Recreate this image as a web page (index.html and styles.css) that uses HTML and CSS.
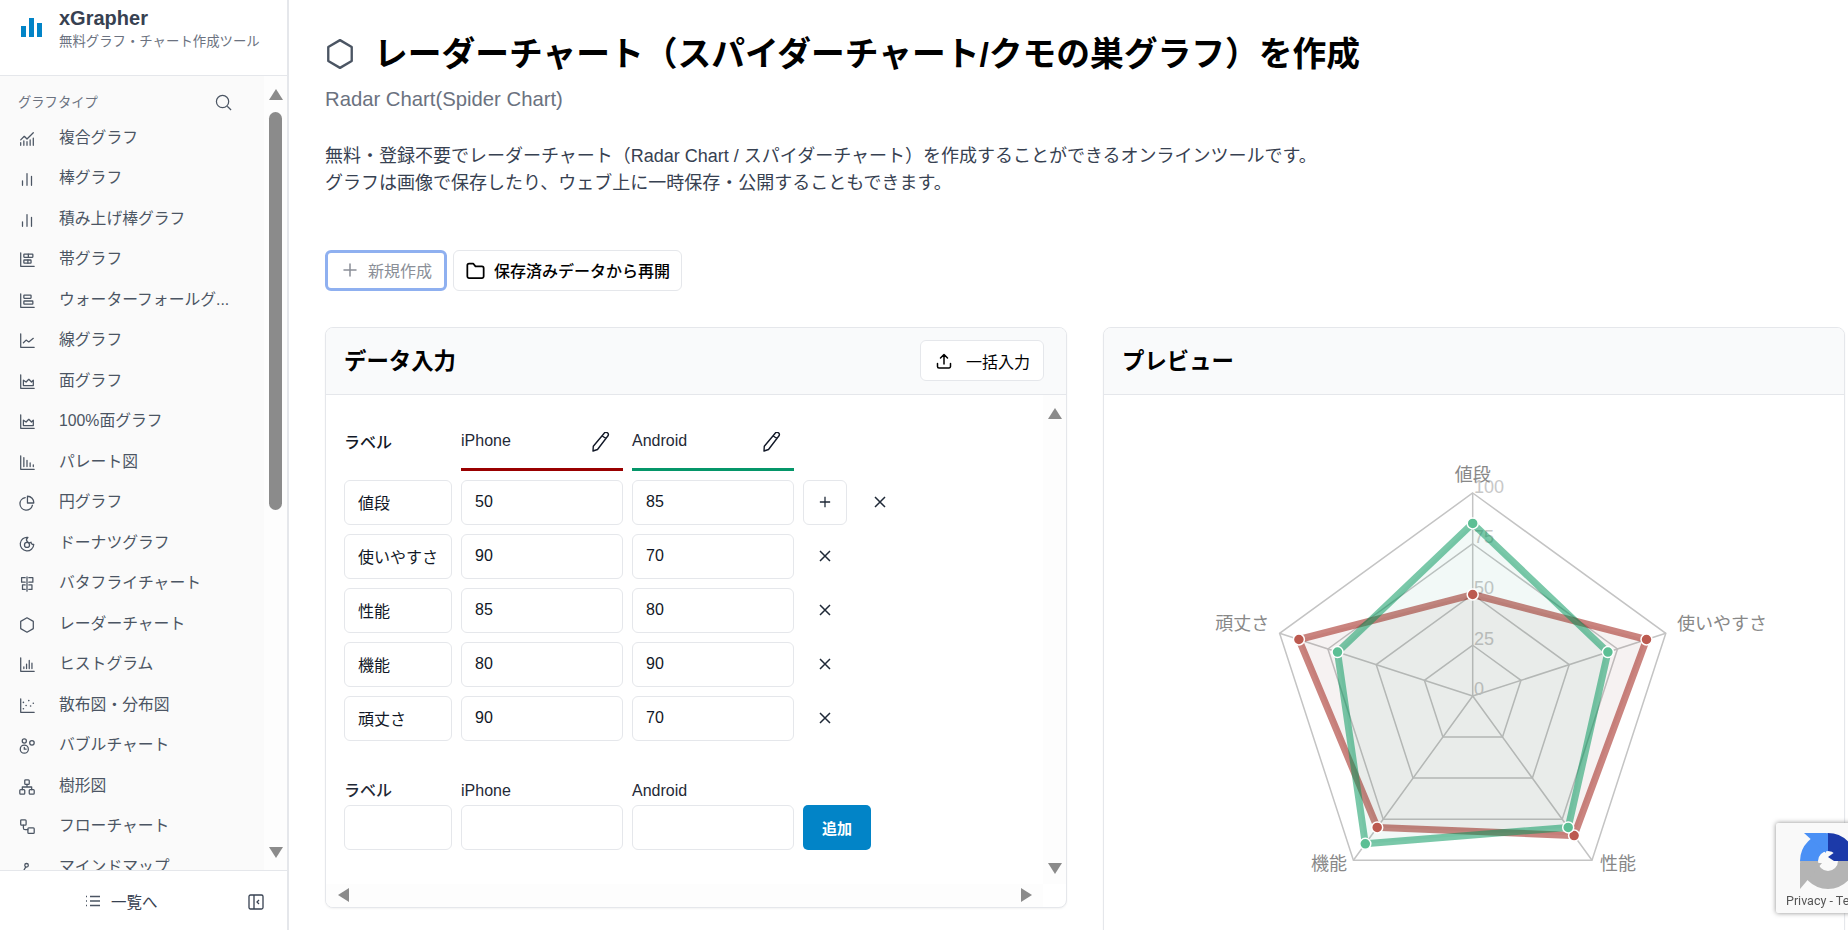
FILE: index.html
```html
<!DOCTYPE html>
<html lang="ja">
<head>
  <meta charset="UTF-8">
  <title>レーダーチャート - xGrapher</title>
  <link rel="stylesheet" href="styles.css">
</head>
<body>

<svg class="sprite" xmlns="http://www.w3.org/2000/svg">
  <symbol id="i-combo" viewBox="0 0 20 20"><path d="M3 17v-3M6.5 17v-5M10 17v-4M13.5 17v-6M17 17V9M3 11l4-4 3 3 7-7"/></symbol>
  <symbol id="i-bar" viewBox="0 0 20 20"><path d="M5 17v-5M10 17V4M15 17V7"/></symbol>
  <symbol id="i-stack" viewBox="0 0 20 20"><path d="M3 2v15h15"/><rect x="6.5" y="3.5" width="10" height="3.5" rx=".5"/><path d="M11.5 3.5V7"/><rect x="6.5" y="10" width="8" height="3.5" rx=".5"/><path d="M11 10v3.5"/></symbol>
  <symbol id="i-fall" viewBox="0 0 20 20"><path d="M3 2v15h15"/><rect x="6.5" y="3.5" width="8" height="3.5" rx=".5"/><rect x="6.5" y="10" width="10" height="3.5" rx=".5"/></symbol>
  <symbol id="i-line" viewBox="0 0 20 20"><path d="M3 2v15h15M6 12l3-3 3 2 5-4"/></symbol>
  <symbol id="i-area" viewBox="0 0 20 20"><path d="M3 2v15h15M6 14V8l3 2 3-3 3 3 2-2v6z"/></symbol>
  <symbol id="i-pareto" viewBox="0 0 20 20"><path d="M3 2v15h15M6.5 14V4M10 14V7M13.5 14v-4M17 14v-2"/></symbol>
  <symbol id="i-pie" viewBox="0 0 20 20"><path d="M8 4a7 7 0 1 0 8 8.5M10.5 2.500a7 7 0 0 1 7 7.500h-7z"/></symbol>
  <symbol id="i-donut" viewBox="0 0 20 20"><path d="M11 2.700a7.500 7.500 0 1 0 6.500 7.800 2.500 2.500 0 0 1-3-2.500 3 3 0 0 1-3.500-5.300z"/><circle cx="10" cy="11" r="2.800"/></symbol>
  <symbol id="i-butterfly" viewBox="0 0 20 20"><path d="M10 2v16M8 3H4v5h4M8 11H5v5h3M12 3h4.500v5H12M12 11h3.500v5H12"/></symbol>
  <symbol id="i-radar" viewBox="0 0 20 20"><path d="M10 2l7 4v8l-7 4-7-4V6z"/></symbol>
  <symbol id="i-hist" viewBox="0 0 20 20"><path d="M3 2v15h15M6.500 14v-2M9.500 14V9M12.500 14V5M15.500 14V8"/></symbol>
  <symbol id="i-scatter" viewBox="0 0 20 20"><path d="M3 2v15h15"/><path class="dots" d="M6 6h.01M6 13h.01M9 9.500h.01M12 4h.01M14 10h.01M17 7h.01"/></symbol>
  <symbol id="i-bubble" viewBox="0 0 20 20"><circle cx="7" cy="13.500" r="4.500"/><circle cx="7" cy="4.500" r="2.300"/><circle cx="15.500" cy="6.500" r="2.500"/><path d="M7 11.500v2h2"/></symbol>
  <symbol id="i-tree" viewBox="0 0 20 20"><rect x="7.500" y="2" width="5" height="5" rx="1"/><rect x="2" y="13" width="5.500" height="5" rx="1"/><rect x="12.500" y="13" width="5.500" height="5" rx="1"/><path d="M10 7v3M4.800 13v-3h10.400v3"/></symbol>
  <symbol id="i-flow" viewBox="0 0 20 20"><rect x="3" y="2" width="6" height="6" rx="1"/><rect x="11" y="11" width="7" height="6" rx="1"/><path d="M6 8v3a2 2 0 0 0 2 2h3"/></symbol>
  <symbol id="i-mind" viewBox="0 0 20 20"><circle cx="4.500" cy="15" r="2"/><circle cx="15.500" cy="15" r="2"/><circle cx="9.500" cy="7" r="2"/><path d="M6 13.500l2.500-4.500M6.500 15h7"/></symbol>
  <symbol id="i-pencil" viewBox="0 0 20 20"><path d="M14 1.500a2.300 2.300 0 0 1 4 2.300L7.500 17.500l-4.500 1.500.300-4.800zM12.300 4l4 2.800"/></symbol>
  <symbol id="i-x" viewBox="0 0 12 12"><path d="M1 1l10 10M11 1L1 11"/></symbol>
</svg>

<div class="page">
  <aside class="sidebar">
    <div class="brand">
      <svg class="brand-logo" viewBox="0 0 21 21"><path d="M0 9h5v11H0zM8 1h5v19H8zM16 6h5v14h-5z"/></svg>
      <div>
        <div class="brand-name">xGrapher</div>
        <div class="brand-sub">無料グラフ・チャート作成ツール</div>
      </div>
    </div>

    <div class="nav-wrap">
      <nav class="nav">
        <div class="nav-title">
          <span>グラフタイプ</span>
          <svg class="nav-search" viewBox="0 0 18 18"><circle cx="8" cy="8" r="6.500"/><path d="M13 13l4 4"/></svg>
        </div>
        <a class="nav-item"><svg class="nav-icon"><use href="#i-combo"/></svg><span>複合グラフ</span></a>
        <a class="nav-item"><svg class="nav-icon"><use href="#i-bar"/></svg><span>棒グラフ</span></a>
        <a class="nav-item"><svg class="nav-icon"><use href="#i-bar"/></svg><span>積み上げ棒グラフ</span></a>
        <a class="nav-item"><svg class="nav-icon"><use href="#i-stack"/></svg><span>帯グラフ</span></a>
        <a class="nav-item"><svg class="nav-icon"><use href="#i-fall"/></svg><span>ウォーターフォールグ...</span></a>
        <a class="nav-item"><svg class="nav-icon"><use href="#i-line"/></svg><span>線グラフ</span></a>
        <a class="nav-item"><svg class="nav-icon"><use href="#i-area"/></svg><span>面グラフ</span></a>
        <a class="nav-item"><svg class="nav-icon"><use href="#i-area"/></svg><span>100%面グラフ</span></a>
        <a class="nav-item"><svg class="nav-icon"><use href="#i-pareto"/></svg><span>パレート図</span></a>
        <a class="nav-item"><svg class="nav-icon"><use href="#i-pie"/></svg><span>円グラフ</span></a>
        <a class="nav-item"><svg class="nav-icon"><use href="#i-donut"/></svg><span>ドーナツグラフ</span></a>
        <a class="nav-item"><svg class="nav-icon"><use href="#i-butterfly"/></svg><span>バタフライチャート</span></a>
        <a class="nav-item"><svg class="nav-icon"><use href="#i-radar"/></svg><span>レーダーチャート</span></a>
        <a class="nav-item"><svg class="nav-icon"><use href="#i-hist"/></svg><span>ヒストグラム</span></a>
        <a class="nav-item"><svg class="nav-icon"><use href="#i-scatter"/></svg><span>散布図・分布図</span></a>
        <a class="nav-item"><svg class="nav-icon"><use href="#i-bubble"/></svg><span>バブルチャート</span></a>
        <a class="nav-item"><svg class="nav-icon"><use href="#i-tree"/></svg><span>樹形図</span></a>
        <a class="nav-item"><svg class="nav-icon"><use href="#i-flow"/></svg><span>フローチャート</span></a>
        <a class="nav-item"><svg class="nav-icon"><use href="#i-mind"/></svg><span>マインドマップ</span></a>
      </nav>
      <div class="nav-scroll">
        <i class="arrow-up"></i>
        <div class="nav-thumb"></div>
        <i class="arrow-down"></i>
      </div>
    </div>

    <div class="side-foot">
      <a class="side-list">
        <svg class="foot-icon" viewBox="0 0 16 16"><path d="M5 3.500h10M5 8h10M5 12.500h10M1 3.500h1M1 8h1M1 12.500h1"/></svg>
        <span>一覧へ</span>
      </a>
      <svg class="foot-collapse" viewBox="0 0 16 16"><rect x="1" y="1" width="14" height="14" rx="1.500"/><path d="M6 1v14M11 6l-2 2 2 2"/></svg>
    </div>
  </aside>

  <main class="main">
    <h1 class="page-title">
      <svg class="title-icon" viewBox="0 0 28 30"><path d="M14 2l11 6.500v13L14 28 3 21.500v-13z"/></svg>
      <span>レーダーチャート（スパイダーチャート/クモの巣グラフ）を作成</span>
    </h1>
    <p class="page-sub">Radar Chart(Spider Chart)</p>
    <p class="page-desc">無料・登録不要でレーダーチャート（Radar Chart / スパイダーチャート）を作成することができるオンラインツールです。<br>グラフは画像で保存したり、ウェブ上に一時保存・公開することもできます。</p>

    <div class="actions">
      <button class="btn btn-new">
        <svg class="btn-icon" viewBox="0 0 16 16"><path d="M8 2v12M2 8h12"/></svg>
        新規作成
      </button>
      <button class="btn btn-resume">
        <svg class="btn-icon" viewBox="0 0 18 18"><path d="M2 4.500a1.500 1.500 0 0 1 1.500-1.500h3.500l2 2.500h5.500a1.500 1.500 0 0 1 1.500 1.500v7a1.500 1.500 0 0 1-1.500 1.500h-11a1.500 1.500 0 0 1-1.500-1.500z"/></svg>
        保存済みデータから再開
      </button>
    </div>

    <div class="cards">
      <section class="card card-data">
        <header class="card-head">
          <h2>データ入力</h2>
          <button class="btn btn-bulk">
            <svg class="btn-icon" viewBox="0 0 18 18"><path d="M9 12V2.500M5.500 6L9 2.500 12.500 6M2.500 11.500v3a1.500 1.500 0 0 0 1.500 1.500h10a1.500 1.500 0 0 0 1.500-1.500v-3"/></svg>
            一括入力
          </button>
        </header>
        <div class="data-body">
          <div class="data-main">
            <div class="data-grid">
              <div class="col-label">ラベル</div>
              <div class="col-head col-red"><span>iPhone</span><svg class="pencil"><use href="#i-pencil"/></svg></div>
              <div class="col-head col-green"><span>Android</span><svg class="pencil"><use href="#i-pencil"/></svg></div>
              <div></div><div></div>

              <input class="cell" value="値段"><input class="cell" value="50"><input class="cell" value="85">
              <button class="row-add"><svg class="row-icon" viewBox="0 0 14 14"><path d="M7 1v12M1 7h12"/></svg></button>
              <button class="row-del"><svg class="row-icon"><use href="#i-x"/></svg></button>

              <input class="cell" value="使いやすさ"><input class="cell" value="90"><input class="cell" value="70">
              <button class="row-del"><svg class="row-icon"><use href="#i-x"/></svg></button><div></div>

              <input class="cell" value="性能"><input class="cell" value="85"><input class="cell" value="80">
              <button class="row-del"><svg class="row-icon"><use href="#i-x"/></svg></button><div></div>

              <input class="cell" value="機能"><input class="cell" value="80"><input class="cell" value="90">
              <button class="row-del"><svg class="row-icon"><use href="#i-x"/></svg></button><div></div>

              <input class="cell" value="頑丈さ"><input class="cell" value="90"><input class="cell" value="70">
              <button class="row-del"><svg class="row-icon"><use href="#i-x"/></svg></button><div></div>
            </div>

            <div class="add-grid">
              <label class="add-first">ラベル</label><label>iPhone</label><label>Android</label><div></div><div></div>
              <input class="cell"><input class="cell"><input class="cell">
              <button class="btn-add">追加</button>
            </div>
          </div>
          <div class="data-vscroll"><i class="arrow-up"></i><i class="arrow-down"></i></div>
          <div class="data-hscroll"><i class="arrow-left"></i><i class="arrow-right"></i></div>
        </div>
      </section>

      <section class="card card-preview">
        <header class="card-head">
          <h2>プレビュー</h2>
        </header>
        <div class="preview-body">
          <svg class="radar" viewBox="-368.700 -301 740 560">
            <g class="radar-grid">
              <polygon class="outer" points="0,-203 193.100,-62.700 119.300,164.200 -119.300,164.200 -193.100,-62.700"/>
              <polygon points="0,-152.250 144.800,-47 89.500,123.200 -89.500,123.200 -144.800,-47"/>
              <polygon points="0,-101.500 96.500,-31.400 59.700,82.100 -59.700,82.100 -96.500,-31.400"/>
              <polygon points="0,-50.750 48.300,-15.700 29.800,41.100 -29.800,41.100 -48.300,-15.700"/>
              <path d="M0 0V-203M0 0L193.100 -62.700M0 0L119.300 164.200M0 0L-119.300 164.200M0 0L-193.100 -62.700"/>
            </g>
            <g class="radar-ticks">
              <text x="1.300" y="-203">100</text>
              <text x="1.300" y="-153">75</text>
              <text x="1.300" y="-102">50</text>
              <text x="1.300" y="-51">25</text>
              <text x="1.300" y="-1">0</text>
            </g>
            <polygon class="set-red" points="0,-101.500 173.800,-56.500 101.400,139.600 -95.500,131.400 -173.800,-56.500"/>
            <polygon class="set-green" points="0,-172.550 135.200,-43.900 95.500,131.400 -107.400,147.800 -135.200,-43.900"/>
            <g class="dots-red">
              <circle cx="0" cy="-101.500" r="5.500"/><circle cx="173.800" cy="-56.500" r="5.500"/><circle cx="101.400" cy="139.600" r="5.500"/><circle cx="-95.500" cy="131.400" r="5.500"/><circle cx="-173.800" cy="-56.500" r="5.500"/>
            </g>
            <g class="dots-green">
              <circle cx="0" cy="-172.550" r="5.500"/><circle cx="135.200" cy="-43.900" r="5.500"/><circle cx="95.500" cy="131.400" r="5.500"/><circle cx="-107.400" cy="147.800" r="5.500"/><circle cx="-135.200" cy="-43.900" r="5.500"/>
            </g>
            <g class="radar-labels">
              <text x="0" y="-215" text-anchor="middle">値段</text>
              <text x="204.300" y="-66">使いやすさ</text>
              <text x="127.300" y="174">性能</text>
              <text x="-125.700" y="174" text-anchor="end">機能</text>
              <text x="-203.500" y="-66" text-anchor="end">頑丈さ</text>
            </g>
          </svg>
        </div>
      </section>
    </div>
  </main>
</div>

<div class="recaptcha">
  <svg class="recaptcha-logo" viewBox="-30 -30 60 60">
    <path class="rc-grey" d="M19 0A19 19 0 0 1-19 0"/>
    <path class="rc-light" d="M-19 0A19 19 0 0 1 0 -19"/>
    <path class="rc-dark" d="M0 -19A19 19 0 0 1 19 0"/>
    <path fill="#4a90f5" d="M-24 -28H-2V-8z"/>
    <path fill="#1c3aa9" d="M0 -4L14 -14 28 0H6z"/>
    <path fill="#b4b4b4" d="M-28 28V2H-6z"/>
  </svg>
  <div class="recaptcha-text">Privacy - Terms</div>
</div>

</body>
</html>
```

FILE: styles.css
```css
* {
  box-sizing: border-box;
}
html, body {
  height: 100%;
  margin: 0;
  overflow: hidden;
}
body {
  font-family: "Liberation Sans", "Noto Sans CJK JP", sans-serif;
  background: #fff;
  color: #111827;
}
.sprite {
  display: none;
}
.page {
  display: flex;
  height: 100vh;
}

/* sidebar */
.sidebar {
  width: 289px;
  flex-shrink: 0;
  display: flex;
  flex-direction: column;
  border-right: 2px solid #e5e7eb;
}
.brand {
  height: 76px;
  flex-shrink: 0;
  display: flex;
  gap: 17px;
  padding: 6px 0 0 21px;
  border-bottom: 1px solid #e5e7eb;
}
.brand-logo {
  width: 21px;
  height: 21px;
  margin-top: 11px;
  fill: #0284c7;
}
.brand-name {
  font-size: 20px;
  font-weight: 700;
  color: #374151;
  line-height: 24px;
}
.brand-sub {
  font-size: 13.400px;
  color: #6b7280;
  line-height: 18px;
  margin-top: 3px;
  white-space: nowrap;
}
.nav-wrap {
  flex: 1;
  display: flex;
  min-height: 0;
}
.nav {
  width: 264px;
  background: #fafafa;
  overflow: hidden;
  padding-top: 15px;
}
.nav-title {
  display: flex;
  align-items: center;
  justify-content: space-between;
  height: 20px;
  padding: 0 32px 0 18px;
  font-size: 13.300px;
  color: #6b7280;
}
.nav-search {
  width: 17px;
  height: 17px;
  fill: none;
  stroke: #4b5563;
  stroke-width: 1.300;
  margin-top: 2px;
}
.nav-item {
  display: flex;
  align-items: center;
  gap: 23px;
  height: 40.500px;
  padding-left: 18px;
  font-size: 15.800px;
  color: #4b5563;
  white-space: nowrap;
}
.nav-item:first-of-type {
  margin-top: 5px;
}
.nav-icon {
  width: 18px;
  height: 18px;
  margin-top: 5px;
  flex-shrink: 0;
  fill: none;
  stroke: #4b5563;
  stroke-width: 1.400;
  stroke-linecap: round;
  stroke-linejoin: round;
}
.dots {
  stroke-width: 1.800;
}
.nav-scroll {
  flex: 1;
  background: #fdfdfd;
  display: flex;
  flex-direction: column;
  align-items: center;
  padding: 13px 0 12px;
}
.nav-thumb {
  width: 13px;
  height: 398px;
  margin-top: 12px;
  border-radius: 7px;
  background: #8b8b8b;
}
.nav-scroll .arrow-down {
  margin-top: auto;
}
.arrow-up, .arrow-down, .arrow-left, .arrow-right {
  display: block;
  width: 0;
  height: 0;
  border-style: solid;
  border-color: transparent;
}
.arrow-up {
  border-width: 0 7.500px 11px;
  border-bottom-color: #8b8b8b;
}
.arrow-down {
  border-width: 11px 7.500px 0;
  border-top-color: #8b8b8b;
}
.arrow-left {
  border-width: 7px 11px 7px 0;
  border-right-color: #8b8b8b;
}
.arrow-right {
  border-width: 7px 0 7px 11px;
  border-left-color: #8b8b8b;
}
.side-foot {
  height: 60px;
  flex-shrink: 0;
  display: flex;
  align-items: center;
  border-top: 1px solid #e5e7eb;
  padding: 0 23px 0 85px;
  color: #374151;
}
.side-list {
  display: flex;
  align-items: center;
  gap: 10px;
  font-size: 15.500px;
}
.foot-icon {
  width: 16px;
  height: 16px;
  fill: none;
  stroke: #4b5563;
  stroke-width: 1.300;
}
.foot-collapse {
  width: 16px;
  height: 16px;
  margin: 3px 0 0 auto;
  fill: none;
  stroke: #374151;
  stroke-width: 1.300;
}

/* main column */
.main {
  flex: 1;
  min-width: 0;
  padding: 29.500px 0 0 36px;
}
.page-title {
  display: flex;
  align-items: center;
  gap: 19px;
  margin: 0;
  height: 44px;
  font-size: 33.750px;
  font-weight: 700;
  color: #000;
  white-space: nowrap;
}
.title-icon {
  width: 30px;
  height: 32px;
  margin-top: 5px;
  flex-shrink: 0;
  fill: none;
  stroke: #4b5563;
  stroke-width: 2.200;
  stroke-linejoin: round;
}
.page-sub {
  margin: 14.500px 0 0;
  font-size: 20.300px;
  line-height: 22px;
  color: #6b7280;
}
.page-desc {
  margin: 33px 0 0;
  font-size: 18px;
  line-height: 27px;
  color: #374151;
  white-space: nowrap;
}
.actions {
  display: flex;
  gap: 6px;
  margin-top: 52.500px;
}
.btn {
  display: flex;
  align-items: center;
  height: 41px;
  font-family: inherit;
  font-size: 16px;
  background: #fff;
  border: 1px solid #e5e7eb;
  border-radius: 6px;
  color: #000;
  padding: 0 14px;
  white-space: nowrap;
}
.btn-icon {
  width: 18px;
  height: 18px;
  flex-shrink: 0;
  fill: none;
  stroke: currentColor;
  stroke-width: 1.500;
  stroke-linecap: round;
  stroke-linejoin: round;
}
.btn-new {
  width: 122px;
  gap: 10px;
  color: #8b8f98;
  border: 3px solid #8fb0f0;
  padding: 0 0 0 14px;
}
.btn-new .btn-icon {
  width: 16px;
  height: 16px;
  stroke: #8b8f98;
}
.btn-resume {
  width: 229px;
  gap: 8px;
  padding: 0 0 0 11px;
  font-weight: 500;
}
.btn-resume .btn-icon {
  width: 21px;
  height: 21px;
}
.btn-bulk {
  width: 124px;
  gap: 13px;
}
.cards {
  display: flex;
  align-items: flex-start;
  gap: 36px;
  margin-top: 36px;
}
.card {
  width: 742px;
  flex-shrink: 0;
  border: 1px solid #e5e7eb;
  border-radius: 8px;
  box-shadow: 0 1px 2px rgba(0, 0, 0, 0.05);
  overflow: hidden;
  background: #fff;
}
.card-head {
  height: 67px;
  display: flex;
  align-items: center;
  justify-content: space-between;
  padding: 0 22px 0 18px;
  background: #f9fafb;
  border-bottom: 1px solid #e5e7eb;
}
.card-head h2 {
  margin: 0;
  padding-bottom: 3px;
  font-size: 22.400px;
  font-weight: 700;
  color: #000;
}

/* data table */
.data-body {
  display: grid;
  grid-template-columns: 717px 23px;
  grid-template-rows: 489px 23px;
}
.data-main {
  padding: 30px 0 0 18px;
}
.data-grid, .add-grid {
  display: grid;
  grid-template-columns: 108px 162px 162px 44px 48px;
  gap: 9px;
  align-items: center;
}
.col-label {
  font-size: 16px;
  font-weight: 500;
  padding-bottom: 13px;
}
.col-head {
  display: flex;
  justify-content: space-between;
  align-items: flex-start;
  height: 46px;
  padding: 7px 13px 0 0;
  font-size: 16px;
  line-height: 18px;
  color: #1f2937;
}
.col-red {
  border-bottom: 3px solid #990000;
}
.col-green {
  border-bottom: 3px solid #059669;
}
.pencil {
  width: 20px;
  height: 20px;
  fill: none;
  stroke: #111827;
  stroke-width: 1.400;
  stroke-linejoin: round;
}
.cell {
  width: 100%;
  height: 45px;
  border: 1px solid #e5e7eb;
  border-radius: 6px;
  padding: 0 13px;
  font-family: inherit;
  font-size: 16px;
  color: #111827;
  background: #fff;
}
.row-add {
  height: 45px;
  border: 1px solid #e5e7eb;
  border-radius: 6px;
  background: #fff;
  padding: 0;
  display: flex;
  align-items: center;
  justify-content: center;
}
.row-del {
  border: none;
  background: none;
  padding: 0;
  display: flex;
  align-items: center;
  justify-content: center;
}
.row-icon {
  width: 12px;
  height: 12px;
  fill: none;
  stroke: #1f2937;
  stroke-width: 1.500;
}
.add-grid {
  row-gap: 4px;
  margin-top: 40px;
}
.add-grid label {
  font-size: 16px;
  line-height: 20px;
  color: #1f2937;
}
.add-grid .add-first {
  font-weight: 500;
}
.btn-add {
  grid-column: span 2;
  width: 68px;
  height: 45px;
  border: none;
  border-radius: 5px;
  background: #0284c7;
  color: #fff;
  font-family: inherit;
  font-size: 15px;
  font-weight: 700;
}
.data-vscroll {
  background: #fdfdfd;
  display: flex;
  flex-direction: column;
  justify-content: space-between;
  align-items: center;
  padding: 13px 0 10px;
}
.data-hscroll {
  background: #fdfdfd;
  display: flex;
  justify-content: space-between;
  align-items: center;
  padding: 0 11px 0 12px;
}

/* preview chart */
.radar {
  display: block;
  width: 740px;
  height: 560px;
}
.radar-grid polygon, .radar-grid path {
  fill: none;
  stroke: #c4c4c4;
  stroke-width: 1.500;
}
.radar-ticks text {
  font-size: 18px;
  fill: #c8c8c8;
}
.radar-labels text {
  font-size: 18px;
  fill: #888;
}
.set-red {
  fill: rgba(110, 40, 30, 0.06);
  stroke: rgba(150, 10, 0, 0.5);
  stroke-width: 7;
}
.set-green {
  fill: rgba(0, 140, 100, 0.05);
  stroke: rgba(0, 150, 90, 0.52);
  stroke-width: 7;
}
.dots-red circle, .dots-green circle {
  stroke: #fff;
  stroke-width: 1.500;
}
.dots-red circle {
  fill: #bc5a50;
}
.dots-green circle {
  fill: #5cbf94;
}

/* recaptcha badge, pinned over the page */
.recaptcha {
  position: fixed;
  left: 1776px;
  top: 823px;
  width: 256px;
  height: 90px;
  background: #f9f9f9;
  border-radius: 2px;
  box-shadow: 0 0 5px rgba(128, 128, 128, 0.9);
  overflow: hidden;
}
.recaptcha-logo {
  display: block;
  width: 60px;
  height: 60px;
  margin: 8px 0 0 22px;
  fill: none;
}
.rc-grey, .rc-light, .rc-dark {
  stroke-width: 18;
}
.rc-grey {
  stroke: #b4b4b4;
}
.rc-light {
  stroke: #4a90f5;
}
.rc-dark {
  stroke: #1c3aa9;
}
.recaptcha-text {
  margin: 3px 0 0 10px;
  font-family: Roboto, sans-serif;
  font-size: 12.500px;
  line-height: 14px;
  color: #555;
  white-space: nowrap;
}
```
